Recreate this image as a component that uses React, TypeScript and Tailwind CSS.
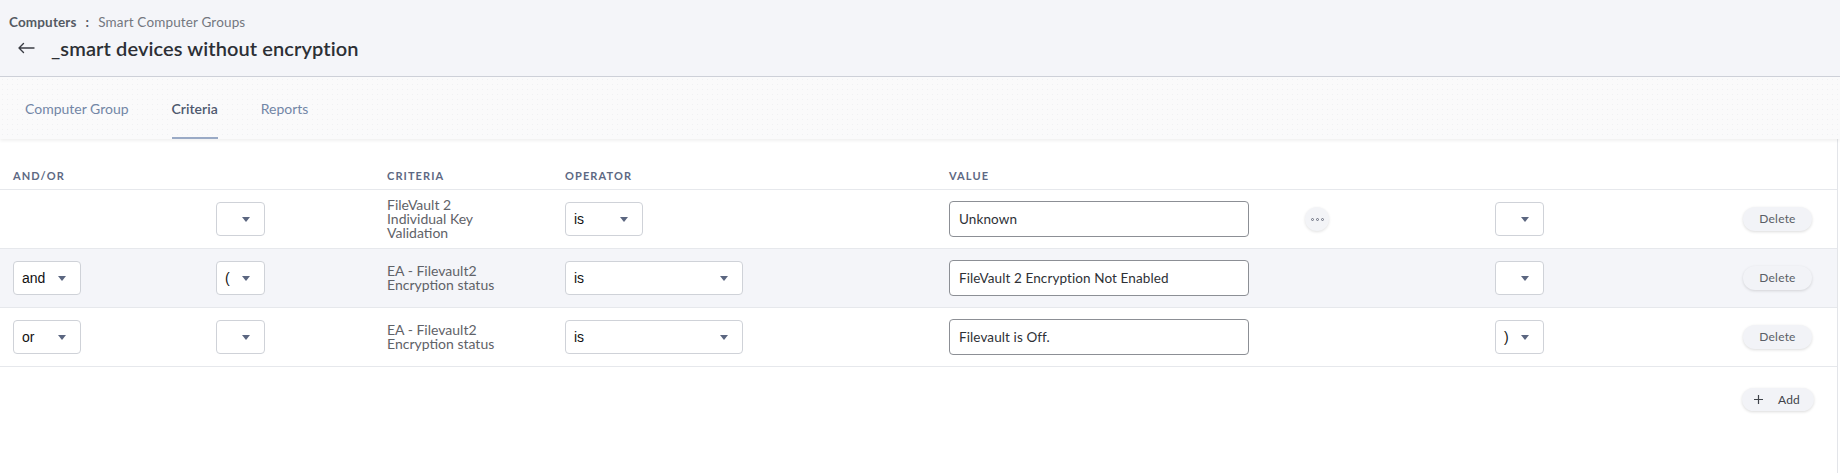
import React from "react";

type Row = {
  andOr?: string;
  open?: string;
  criteria: string[];
  opWide: boolean;
  value: string;
  more?: boolean;
  close?: string;
  shaded?: boolean;
};

const rows: Row[] = [
  {
    criteria: ["FileVault 2", "Individual Key", "Validation"],
    opWide: false,
    value: "Unknown",
    more: true,
  },
  {
    andOr: "and",
    open: "(",
    criteria: ["EA - Filevault2", "Encryption status"],
    opWide: true,
    value: "FileVault 2 Encryption Not Enabled",
    shaded: true,
  },
  {
    andOr: "or",
    criteria: ["EA - Filevault2", "Encryption status"],
    opWide: true,
    value: "Filevault is Off.",
    close: ")",
  },
];

function Caret() {
  return (
    <svg width="8" height="5" viewBox="0 0 8 5" className="shrink-0">
      <path d="M0 0h8L4 5z" fill="#5b6680" />
    </svg>
  );
}

function Select({ value, width }: { value?: string; width: string }) {
  return (
    <div
      className={`${width} h-[34px] flex items-center justify-between pl-[8px] pr-[14px] bg-white border border-[#cfd2d8] rounded-[4px] font-['Liberation_Sans',Arial,sans-serif] text-[14px] text-[#111]`}
    >
      <span>{value ?? ""}</span>
      <Caret />
    </div>
  );
}

export default function App() {
  return (
    <div className="w-[1840px] h-[473px] bg-white font-['Lato',sans-serif] overflow-hidden">
      {/* page header */}
      <div className="h-[77px] bg-[#f4f5f9] border-b border-[#cdd0d8] pl-[9px] pt-[12px]">
        <div className="flex items-center text-[13.5px] leading-[20px] tracking-[0.15px]">
          <span className="font-bold text-[#555a63]">Computers</span>
          <span className="mx-[9px] font-bold text-[#555a63]">:</span>
          <span className="text-[#73777f]">Smart Computer Groups</span>
        </div>
        <div className="flex items-center mt-[4px] h-[24px]">
          <svg width="18" height="12" viewBox="0 0 18 12" className="ml-[8px]">
            <path d="M17 6H2M6.5 1.5 2 6l4.5 4.5" stroke="#3a3d44" strokeWidth="1.4" fill="none" strokeLinecap="round" strokeLinejoin="round" />
          </svg>
          <h1 className="ml-[16px] text-[20px] font-semibold text-[#2c2f35] tracking-[0.1px]">
            _smart devices without encryption
          </h1>
        </div>
      </div>

      {/* tabs */}
      <div className="relative h-[62px] bg-[#fafafb] bg-[radial-gradient(#f0f1f3_0.8px,transparent_0.9px)] bg-[length:5px_5px] shadow-[0_2px_3px_rgba(0,0,0,0.06)] flex items-end pl-[25px] gap-[43px]">
        <div className="h-full flex items-center text-[14px] text-[#7286a6]">Computer Group</div>
        <div className="h-full flex flex-col items-center justify-center relative text-[14px] font-semibold text-[#4d586e]">
          Criteria
          <span className="absolute bottom-0 left-0 right-0 h-[2px] bg-[#9aaac6]" />
        </div>
        <div className="h-full flex items-center text-[14px] text-[#7286a6]">Reports</div>
      </div>

      {/* criteria table */}
      <div className="w-[1838px] h-[334px] border-r border-[#e3e5e9] pt-[23px]">
        <div className="h-[28px] flex items-center border-b border-[#e6e8ec] pt-[2px] text-[11px] font-bold tracking-[1.1px] text-[#5d6983] uppercase">
          <div className="w-[387px] pl-[13px]">And/Or</div>
          <div className="w-[178px]">Criteria</div>
          <div className="w-[384px]">Operator</div>
          <div>Value</div>
        </div>

        {rows.map((r, i) => (
          <div
            key={i}
            className={`h-[59px] flex items-center border-b border-[#e6e8ec] ${r.shaded ? "bg-[#f4f5f9]" : "bg-white"}`}
          >
            <div className="w-[216px] pl-[13px]">
              {r.andOr && <Select value={r.andOr} width="w-[68px]" />}
            </div>
            <div className="w-[171px]">
              <Select value={r.open} width="w-[49px]" />
            </div>
            <div className="w-[178px] text-[14px] leading-[14px] text-[#5f6268]">
              {r.criteria.map((c) => (
                <div key={c}>{c}</div>
              ))}
            </div>
            <div className="w-[384px]">
              <Select value="is" width={r.opWide ? "w-[178px]" : "w-[78px]"} />
            </div>
            <div className="w-[546px] flex items-center">
              <div className="w-[300px] h-[36px] flex items-center pl-[9px] border border-[#8c8f95] rounded-[4px] bg-white text-[13.5px] tracking-[0.1px] text-[#2e3136]">
                {r.value}
              </div>
              {r.more && (
                <div className="ml-[56px] w-[24px] h-[24px] rounded-full bg-[#f3f4f7] shadow-[0_1px_3px_rgba(0,0,0,0.12)] flex items-center justify-center gap-[2px]">
                  {[0, 1, 2].map((d) => (
                    <span key={d} className="w-[3px] h-[3px] rounded-full border border-[#6b7080]" />
                  ))}
                </div>
              )}
            </div>
            <div className="w-[248px]">
              <Select value={r.close} width="w-[49px]" />
            </div>
            <div className="w-[69px] h-[24px] rounded-full bg-[#f2f3f7] shadow-[0_1px_3px_rgba(0,0,0,0.14)] flex items-center justify-center text-[12px] tracking-[0.2px] text-[#5a5e66]">
              Delete
            </div>
          </div>
        ))}

        <div className="flex justify-end pr-[23px] pt-[21px]">
          <div className="w-[72px] h-[23px] rounded-full bg-[#f2f3f7] shadow-[0_1px_3px_rgba(0,0,0,0.14)] flex items-center pl-[12px] text-[12px] tracking-[0.2px] text-[#3f434a]">
            <svg width="9" height="9" viewBox="0 0 9 9">
              <path d="M4.5 0v9M0 4.5h9" stroke="#3f434a" strokeWidth="1.2" />
            </svg>
            <span className="ml-[15px]">Add</span>
          </div>
        </div>
      </div>
    </div>
  );
}
